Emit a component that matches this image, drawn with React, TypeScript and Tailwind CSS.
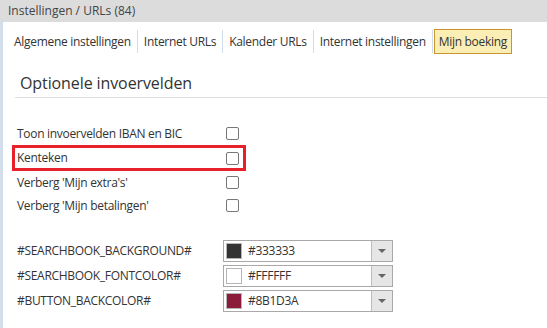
import { useState } from "react";

const tabs = ["Algemene instellingen", "Internet URLs", "Kalender URLs", "Internet instellingen", "Mijn boeking"];

const fields = [
  { label: "Toon invoervelden IBAN en BIC", marked: false },
  { label: "Kenteken", marked: true },
  { label: "Verberg 'Mijn extra's'", marked: false },
  { label: "Verberg 'Mijn betalingen'", marked: false },
];

const colors = [
  { label: "#SEARCHBOOK_BACKGROUND#", value: "#333333" },
  { label: "#SEARCHBOOK_FONTCOLOR#", value: "#FFFFFF" },
  { label: "#BUTTON_BACKCOLOR#", value: "#8B1D3A" },
];

function ColorPicker({ value }: { value: string }) {
  return (
    <div className="flex h-[22px] w-[170px] border border-[#a9a9a9] bg-white">
      <div className="flex flex-1 items-center gap-[6px] pl-[2px]">
        <span className="h-[16px] w-[16px] border border-[#b5b5b5]" style={{ background: value }} />
        <span className="text-[12px] text-[#333]">{value}</span>
      </div>
      <div className="flex w-[21px] items-center justify-center border-l border-[#bdbdbd] bg-[#e6e6e6]">
        <span className="h-0 w-0 border-x-[4px] border-t-[4px] border-x-transparent border-t-[#666]" />
      </div>
    </div>
  );
}

export default function App() {
  const [checked, setChecked] = useState<boolean[]>([false, false, false, false]);

  return (
    <div className="flex h-[328px] w-[547px] flex-col overflow-hidden bg-white font-['Open_Sans',sans-serif] text-[12px] tracking-[-0.3px] text-[#333]">
      <div className="flex h-[22px] items-center bg-[#dcdcdc] pl-[8px] tracking-normal text-[#444]">Instellingen / URLs (84)</div>
      <div className="flex flex-1 border-l-[3px] border-[#d3deeb]">
        <div className="flex flex-1 flex-col">
          <div className="mt-[7px] flex h-[25px] items-center pl-[5px]">
            {tabs.map((t, i) => (
              <div key={t} className="flex items-center">
                {i > 0 && <span className="h-[23px] w-px bg-[#cfdcec]" />}
                {i === tabs.length - 1 ? (
                  <span className="ml-[1px] flex h-[25px] items-center border border-[#c9962e] bg-[#fbeeb5] px-[4px]">{t}</span>
                ) : (
                  <span className="px-[6px]">{t}</span>
                )}
              </div>
            ))}
          </div>
          <div className="ml-[12px] mt-[17px] border-b border-[#dcdcdc] pb-[2px] pl-[5px] text-[16px] tracking-[-0.1px] text-[#333]">
            Optionele invoervelden
          </div>
          <div className="mt-[24px] flex flex-col">
            {fields.map((f, i) => (
              <div
                key={f.label}
                className={
                  f.marked
                    ? "ml-[9px] flex h-[26px] w-[234px] items-center border-[3px] border-[#e8202a] pl-[2px]"
                    : "ml-[9px] flex h-[23px] w-[234px] items-center border-[3px] border-transparent pl-[2px]"
                }
              >
                <span className="w-[209px]">{f.label}</span>
                <button
                  onClick={() => setChecked(checked.map((c, j) => (j === i ? !c : c)))}
                  className="h-[13px] w-[13px] rounded-[2px] border border-[#777] bg-white"
                />
              </div>
            ))}
          </div>
          <div className="mt-[23px] flex flex-col gap-[3px] pl-[14px]">
            {colors.map((c) => (
              <div key={c.label} className="flex items-center">
                <span className="w-[206px]">{c.label}</span>
                <ColorPicker value={c.value} />
              </div>
            ))}
          </div>
        </div>
      </div>
    </div>
  );
}
